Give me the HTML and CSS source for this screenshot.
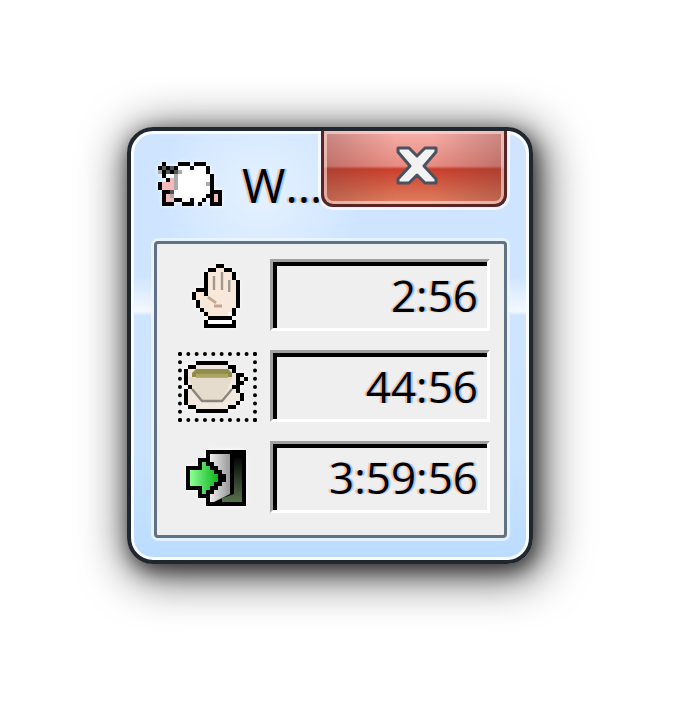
FILE: index.html
```html
<!DOCTYPE html>
<html lang="en">
<head>
<meta charset="utf-8">
<title>W...</title>
<link rel="stylesheet" href="styles.css">
</head>
<body>
<main class="window">
  <header class="titlebar">
    <svg class="icon sheep" viewBox="0 0 16 11" width="64" height="44" aria-hidden="true">
      <path fill="#fff" d="M5 1h7v2h1v4h-1v2h-1v1H9V9H8v1H6V9H4V3h1z"/>
      <path fill="#f5b9b9" d="M1 5h3v2H1zM2 4h2v1H2zM2 8h2v2H2zM14 8h1v2h-1z"/>
      <path fill="#fff" d="M2 3h2v1H2z"/>
      <path stroke="#000" d="M1 .5h1M5 .5h3M9 .5h3M0 1.500h1M2 1.500h1M4 1.500h1M8 1.500h1M12 1.500h1M1 2.500h1M3 2.500h1M12 2.500h1M1 3.500h1M13 3.500h1M2 4.500h1M13 4.500h1M0 5.500h1M13 5.500h1M0 6.500h1M13 6.500h1M1 7.500h2M13 7.500h3M1 8.500h1M12 8.500h2M15 8.500h1M1 9.500h1M4 9.500h2M8 9.500h1M11 9.500h1M13 9.500h1M15 9.500h1M1 10.500h3M6 10.500h3M10 10.500h1M13 10.500h3"/>
      <path stroke="#555" d="M1 1.500h1M3 1.500h1M2 2.500h1M4 2.500h1M3 7.500h1"/>
      <path stroke="#aaa" d="M0 2.500h1M4 3.500h1M5 2.500h1M4 4.500h1M4 5.500h1M4 6.500h1M12 5.500h1M3 8.500h1"/>
    </svg>
    <h1 class="title">W...</h1>
    <button class="close" type="button" aria-label="Close">
      <svg viewBox="0 0 44 40" width="44" height="40" aria-hidden="true">
        <path fill="#f2f2f2" stroke="#4a5262" stroke-width="3" stroke-linejoin="round" d="M3 2h11l8 8 8-8h11v4L29 20l12 13v4H30l-8-8-8 8H3v-4l12-13L3 6z"/>
      </svg>
    </button>
  </header>
  <section class="panel">
    <button class="action" type="button" aria-label="Micro-break">
      <svg class="icon" viewBox="0 0 12 16" width="48" height="64" aria-hidden="true">
        <path fill="#f8e8da" d="M4 2h2V1h2v1h2v2h1v7h-1v1H9v1H4v-1H3v-1H2V9H1V7h2l1 1z"/>
        <path fill="#fff" d="M4 14h6v1H4z"/>
        <path stroke="#a49990" stroke-width=".6" fill="none" d="M5.500 3v3.500M7.500 2v4.500M9.300 4v3"/>
        <path stroke="#c6a68e" stroke-width=".7" fill="none" d="M4 8.300l2 1.400M5.500 10.500h2"/>
        <path stroke="#000" d="M6 .5h2M4 1.500h2M8 1.500h2M3 2.500h1M10 2.500h1M3 3.500h1M10 3.500h1M3 4.500h1M11 4.500h1M3 5.500h1M11 5.500h1M1 6.500h3M11 6.500h1M0 7.500h1M3 7.500h1M11 7.500h1M0 8.500h1M11 8.500h1M1 9.500h1M11 9.500h1M1 10.500h1M11 10.500h1M2 11.500h1M10 11.500h1M3 12.500h1M10 12.500h1M4 13.500h6M3 14.500h1M10 14.500h1M3 15.500h8"/>
      </svg>
    </button>
    <output class="timer">2:56</output>
    <button class="action selected" type="button" aria-label="Rest break">
      <svg class="icon" viewBox="0 0 16 13" width="64" height="52" aria-hidden="true">
        <path fill="#f1e9df" d="M3 1h8v1h2v1h1v1h1v1h-1v1h-2v1h2v3h-1v1h-2v1H3v-1H1V7h1V6H1V2h2z"/>
        <path fill="#e5dccd" d="M1 4h11l-1 3-2 3H5L3 8z"/>
        <path fill="#918c49" d="M3 2h8l1 1v1H2V3z"/>
        <path fill="#aaa462" d="M3 3.200h8v1H3z"/>
        <path stroke="#8b857d" stroke-width=".6" fill="none" d="M2 7l2.500 3h5L12 7"/>
        <path stroke="#000" d="M3 .5h8M1 1.500h2M11 1.500h2M0 2.500h1M12 2.500h1M0 3.500h1M13 3.500h2M0 4.500h1M13 4.500h1M15 4.500h1M0 5.500h1M13 5.500h2M1 6.500h1M12 6.500h2M0 7.500h1M13 7.500h1M0 8.500h1M14 8.500h1M0 9.500h1M14 9.500h1M0 10.500h1M13 10.500h1M1 11.500h2M11 11.500h2M3 12.500h8"/>
      </svg>
    </button>
    <output class="timer">44:56</output>
    <button class="action" type="button" aria-label="Daily limit">
      <svg class="icon" viewBox="0 0 15 14" width="60" height="56" aria-hidden="true">
        <defs>
          <linearGradient id="leaf"><stop offset="0" stop-color="#eee"/><stop offset="1" stop-color="#989898"/></linearGradient>
          <linearGradient id="dusk" x1="0" y1="0" x2="0" y2="1"><stop offset="0" stop-color="#050805"/><stop offset="1" stop-color="#56724d"/></linearGradient>
          <linearGradient id="arrow"><stop offset="0" stop-color="#8cff96"/><stop offset="1" stop-color="#0db41d"/></linearGradient>
        </defs>
        <path fill="#000" d="M5 0h10v14H5v-2H3v-2H0V4h3V2h2z"/>
        <path fill="url(#dusk)" d="M12 2h2v11H9v-1l3-1z"/>
        <path fill="url(#leaf)" d="M6 1h5v10l-2 1-2 1H6v-2l3-3V6L6 3z"/>
        <path fill="#000" d="M5 2h1v1h1v1h1v1h1v1h1v2H9v1H8v1H7v1H6v1H5z"/>
        <path fill="url(#arrow)" d="M1 5h3V3h1v1h1v1h1v1h1v2H7v1H6v1H5v1H4V9H1z"/>
      </svg>
    </button>
    <output class="timer">3:59:56</output>
  </section>
</main>
</body>
</html>
```
FILE: styles.css
```css
* { box-sizing: border-box; }

body {
  margin: 0;
  padding: 127px 147px 140px 127px;
  background: #fff;
  font-family: "Open Sans", "Noto Sans", sans-serif;
  color: #000;
}

.window {
  padding: 0 22px 22px 23px;
  border: 4px solid #20272f;
  border-radius: 26px;
  background:
    radial-gradient(circle at 130px 60px, #e6f2ff, rgba(230, 242, 255, 0) 100px),
    linear-gradient(#cfe5ff 0, #cfe5ff 34%, #f4f9ff 42%, #cfe5ff 43%, #cbe4ff 75%, #bbdcff 100%);
  box-shadow:
    inset 0 0 0 3px #fafdff,
    3px 6px 20px rgba(0, 0, 0, .6),
    5px 8px 46px 6px rgba(0, 0, 0, .65);
}

.titlebar {
  display: flex;
  align-items: flex-start;
  height: 110px;
  overflow-x: visible;
  overflow-y: clip;
}

.sheep {
  flex: none;
  margin: 31px 20px 0 4px;
}

.title {
  flex: 1;
  min-width: 0;
  margin: 22px 0 0;
  font-size: 47px;
  font-weight: 400;
  line-height: 64px;
  white-space: nowrap;
}

.title,
.timer {
  text-shadow: -2px 0 1px rgba(255, 150, 40, .5), 2px 0 1px rgba(40, 150, 255, .5);
}

.icon {
  display: block;
  filter: drop-shadow(0 0 2px #fff);
}

.close {
  flex: none;
  display: flex;
  justify-content: center;
  width: 186px;
  height: 76px;
  padding: 15px 0 0 5px;
  border: 3px solid #5b2424;
  border-top: 0;
  border-radius: 0 0 12px 12px;
  background:
    linear-gradient(90deg, rgba(120, 60, 60, .35), transparent 40%, transparent 60%, rgba(120, 60, 60, .35)),
    linear-gradient(#f5b0a9, #e78b80 48%, #cb3f2b 52%, #df8262);
  box-shadow: inset 0 0 0 3px rgba(255, 225, 220, .6), 0 0 0 3px rgba(255, 255, 255, .7);
}

.panel {
  display: grid;
  grid-template-columns: 79px 1fr;
  gap: 19px 13px;
  align-items: end;
  padding: 15px 14px 22px 21px;
  border: 3px solid #617285;
  border-radius: 4px;
  background: #efefef;
  box-shadow: 0 0 0 3px rgba(235, 246, 255, .85);
}

.action {
  display: flex;
  align-items: center;
  justify-content: center;
  height: 70px;
  padding: 0 4px 0 0;
  border: 4px solid transparent;
  background: none;
}

.selected {
  border: 4px dotted #000;
}

.timer {
  height: 72px;
  padding: 0 9px 0 0;
  border: 3px solid;
  border-color: #a0a0a0 #fff #fff #a0a0a0;
  box-shadow: inset 4px 4px 0 #000;
  font-size: 44px;
  line-height: 66px;
  text-align: right;
}
```
